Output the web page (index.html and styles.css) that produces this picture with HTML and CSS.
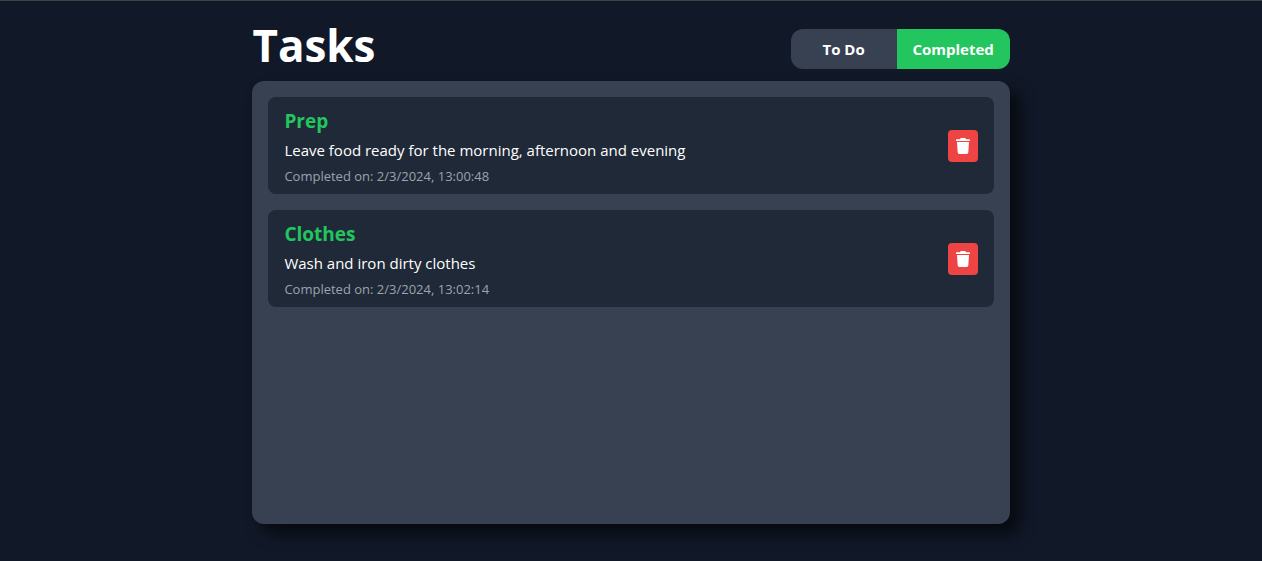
FILE: index.html
```html
<!DOCTYPE html>
<html lang="en">
<head>
<meta charset="utf-8">
<meta name="viewport" content="width=device-width, initial-scale=1">
<title>Tasks</title>
<link rel="stylesheet" href="styles.css">
</head>
<body>
<main class="app">
  <header class="header">
    <h1 class="title">Tasks</h1>
    <nav class="tabs" aria-label="Task filter">
      <button class="tab" type="button">To Do</button>
      <button class="tab tab-active" type="button" aria-pressed="true">Completed</button>
    </nav>
  </header>
  <ul class="panel">
    <li class="card">
      <div class="info">
        <h2 class="name">Prep</h2>
        <p class="text">Leave food ready for the morning, afternoon and evening</p>
        <p class="date">Completed on: 2/3/2024, 13:00:48</p>
      </div>
      <button class="delete" type="button" aria-label="Delete Prep">
        <svg class="icon" viewBox="0 0 14 16" aria-hidden="true"><path d="M0.5 1.2H4L4.6 0.3Q4.8 0 5.2 0H8.8Q9.2 0 9.4 0.3L10 1.2H13.5Q14 1.2 14 1.7V2.6Q14 3.1 13.5 3.1H0.5Q0 3.1 0 2.6V1.7Q0 1.2 0.5 1.2ZM1 4.1H13L12.3 14.6Q12.2 16 10.8 16H3.2Q1.8 16 1.7 14.6Z"/></svg>
      </button>
    </li>
    <li class="card">
      <div class="info">
        <h2 class="name">Clothes</h2>
        <p class="text">Wash and iron dirty clothes</p>
        <p class="date">Completed on: 2/3/2024, 13:02:14</p>
      </div>
      <button class="delete" type="button" aria-label="Delete Clothes">
        <svg class="icon" viewBox="0 0 14 16" aria-hidden="true"><path d="M0.5 1.2H4L4.6 0.3Q4.8 0 5.2 0H8.8Q9.2 0 9.4 0.3L10 1.2H13.5Q14 1.2 14 1.7V2.6Q14 3.1 13.5 3.1H0.5Q0 3.1 0 2.6V1.7Q0 1.2 0.5 1.2ZM1 4.1H13L12.3 14.6Q12.2 16 10.8 16H3.2Q1.8 16 1.7 14.6Z"/></svg>
      </button>
    </li>
  </ul>
</main>
</body>
</html>
```
FILE: styles.css
```css
* {
  box-sizing: border-box;
  margin: 0;
  padding: 0;
}

body {
  min-height: 100vh;
  display: flex;
  flex-direction: column;
  border-top: 1px solid #3f4142;
  background: #111827;
  color: #fff;
  font-family: "Segoe UI", "Open Sans", "Noto Sans", sans-serif;
  font-size: 15px;
}

.app {
  flex: 1;
  display: flex;
  flex-direction: column;
  gap: 12px;
  width: 60%;
  margin: 0 auto;
  padding: 20px 0 37px;
}

.header {
  display: flex;
  justify-content: space-between;
  align-items: flex-end;
}

.title {
  font-size: 44px;
  line-height: 48px;
  font-weight: 700;
}

.tabs {
  display: flex;
  border-radius: 12px;
  overflow: hidden;
}

.tab {
  height: 40px;
  padding: 0 12px;
  min-width: 106px;
  border: 0;
  background: #374151;
  color: #fff;
  font: inherit;
  font-weight: 700;
  cursor: pointer;
}

.tab-active {
  min-width: 113px;
  background: #22c55e;
}

.panel {
  flex: 1;
  display: flex;
  flex-direction: column;
  gap: 16px;
  padding: 16px;
  list-style: none;
  border-radius: 12px;
  background: #374151;
  box-shadow: 10px 10px 15px rgba(0, 0, 0, 0.6);
}

.card {
  display: flex;
  justify-content: space-between;
  align-items: center;
  padding: 8px 16px;
  border-radius: 8px;
  background: #1f2937;
}

.name {
  color: #22c55e;
  font-size: 19px;
  line-height: 32px;
  font-weight: 700;
}

.text {
  line-height: 26px;
}

.date {
  margin-top: 4px;
  color: #9ca3af;
  font-size: 13px;
  line-height: 19px;
}

.delete {
  display: grid;
  place-items: center;
  width: 30px;
  height: 32px;
  border: 0;
  border-radius: 4px;
  background: #ef4444;
  color: #fff;
  cursor: pointer;
}

.icon {
  width: 14px;
  height: 16px;
  fill: currentColor;
}
```
